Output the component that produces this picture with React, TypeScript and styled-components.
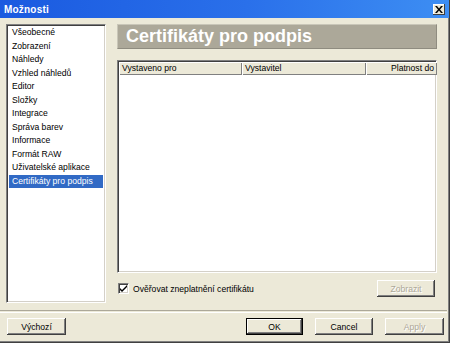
import { FC } from 'react';
import styled, { createGlobalStyle, css } from 'styled-components';

const GlobalStyle = createGlobalStyle`
  html, body {
    margin: 0;
    padding: 0;
    background: #ece9d8;
  }
  body {
    font-family: 'Liberation Sans', Arial, sans-serif;
    font-size: 8.6px;
    color: #000;
  }
`;

const sections = [
  'Všeobecné',
  'Zobrazení',
  'Náhledy',
  'Vzhled náhledů',
  'Editor',
  'Složky',
  'Integrace',
  'Správa barev',
  'Informace',
  'Formát RAW',
  'Uživatelské aplikace',
  'Certifikáty pro podpis',
];

const columns = [
  { label: 'Vystaveno pro', width: 123, align: 'left' },
  { label: 'Vystavitel', width: 124, align: 'left' },
  { label: 'Platnost do', width: 71, align: 'right' },
];

const App: FC = () => {
  return (
    <>
      <GlobalStyle />
      <Window>
        <TitleBar>
          <Title>Možnosti</Title>
          <CloseButton>
            <svg width="8" height="7" viewBox="0 0 8 7">
              <path d="M0 0h2l2 2.5L6 0h2L5 3.5 8 7H6L4 4.5 2 7H0l3-3.5z" fill="#000" />
            </svg>
          </CloseButton>
        </TitleBar>
        <Body>
          <Main>
            <SectionList>
              {sections.map((s) => (
                <SectionItem key={s} selected={s === 'Certifikáty pro podpis'}>
                  {s}
                </SectionItem>
              ))}
            </SectionList>
            <Panel>
              <PanelHeader>Certifikáty pro podpis</PanelHeader>
              <Table>
                <HeaderRow>
                  {columns.map((c) => (
                    <HeaderCell key={c.label} w={c.width} align={c.align}>
                      {c.label}
                    </HeaderCell>
                  ))}
                  <HeaderFill />
                </HeaderRow>
              </Table>
              <OptionsRow>
                <CheckLabel>
                  <CheckBox>
                    <svg width="7" height="7" viewBox="0 0 7 7">
                      <path d="M0 3l2 2 5-5v2L2 7 0 5z" fill="#000" />
                    </svg>
                  </CheckBox>
                  Ověřovat zneplatnění certifikátu
                </CheckLabel>
                <Button disabled wide={58}>Zobrazit</Button>
              </OptionsRow>
            </Panel>
          </Main>
          <Separator />
          <Footer>
            <Button wide={59}>Výchozí</Button>
            <FooterRight>
              <Button wide={57} primary>OK</Button>
              <Button wide={58}>Cancel</Button>
              <Button wide={59} disabled>Apply</Button>
            </FooterRight>
          </Footer>
        </Body>
      </Window>
    </>
  );
};

export default App;

const Window = styled.div`
  width: 450px;
  height: 343px;
  box-sizing: border-box;
  display: flex;
  flex-direction: column;
  background: #ece9d8;
  border-right: 1px solid #404040;
  border-bottom: 1px solid #404040;
  box-shadow: inset -1px -1px 0 #808080;
`;

const TitleBar = styled.div`
  height: 18px;
  flex: none;
  display: flex;
  align-items: center;
  justify-content: space-between;
  padding: 0 4px 0 4px;
  background: linear-gradient(90deg, #1a5ae0 0%, #2a70ea 55%, #3d8ef3 100%);
`;

const Title = styled.span`
  color: #fff;
  font-weight: bold;
  font-size: 10px;
  letter-spacing: 0.2px;
`;

const CloseButton = styled.div`
  width: 12px;
  height: 11px;
  display: flex;
  align-items: center;
  justify-content: center;
  background: #ece9d8;
  box-shadow: inset -1px -1px 0 #404040, inset 1px 1px 0 #fff;
`;

const Body = styled.div`
  flex: 1;
  display: flex;
  flex-direction: column;
`;

const Main = styled.div`
  display: flex;
  gap: 11px;
  padding: 6px 0 0 6px;
  height: 279px;
`;

const SectionList = styled.div`
  width: 100px;
  height: 279px;
  box-sizing: border-box;
  background: #fff;
  border-top: 1px solid #808080;
  border-left: 1px solid #808080;
  border-right: 1px solid #fff;
  border-bottom: 1px solid #fff;
  box-shadow: inset 1px 1px 0 #404040, inset -1px -1px 0 #d4d0c8;
  padding: 1px 2px;
`;

const SectionItem = styled.div<{ selected?: boolean }>`
  height: 13.5px;
  line-height: 13.5px;
  padding-left: 3px;
  white-space: nowrap;
  ${({ selected }) =>
    selected
      ? css`
          background: #316ac5;
          color: #fff;
        `
      : null}
`;

const Panel = styled.div`
  width: 320px;
  display: flex;
  flex-direction: column;
`;

const PanelHeader = styled.div`
  height: 25px;
  box-sizing: border-box;
  padding-left: 8px;
  background: #aca899;
  border-top: 1px solid #c9c6b8;
  border-left: 1px solid #c9c6b8;
  border-right: 1px solid #8f8c80;
  border-bottom: 1px solid #8f8c80;
  color: #fff;
  font-weight: bold;
  font-size: 18px;
  line-height: 23px;
  white-space: nowrap;
`;

const Table = styled.div`
  margin-top: 11px;
  height: 213px;
  box-sizing: border-box;
  background: #fff;
  border-top: 1px solid #808080;
  border-left: 1px solid #808080;
  border-right: 1px solid #fff;
  border-bottom: 1px solid #fff;
  box-shadow: inset 1px 1px 0 #404040, inset -1px -1px 0 #d4d0c8;
  padding: 1px;
`;

const HeaderRow = styled.div`
  display: flex;
  height: 13px;
`;

const HeaderCell = styled.div<{ w: number; align: string }>`
  width: ${({ w }) => w}px;
  box-sizing: border-box;
  flex: none;
  text-align: ${({ align }) => align};
  padding: 0 3px;
  line-height: 13px;
  background: #ece9d8;
  box-shadow: inset 1px 1px 0 #fff, inset -1px -1px 0 #808080;
  white-space: nowrap;
`;

const HeaderFill = styled.div`
  flex: 1;
  background: #ece9d8;
  box-shadow: inset 1px 1px 0 #fff, inset -1px -1px 0 #808080;
`;

const OptionsRow = styled.div`
  display: flex;
  align-items: center;
  justify-content: space-between;
  margin-top: 7px;
  padding-right: 2px;
`;

const CheckLabel = styled.label`
  display: flex;
  align-items: center;
  gap: 4px;
  padding-left: 1px;
`;

const CheckBox = styled.span`
  width: 11px;
  height: 11px;
  box-sizing: border-box;
  display: flex;
  align-items: center;
  justify-content: center;
  background: #fff;
  border-top: 1px solid #808080;
  border-left: 1px solid #808080;
  border-right: 1px solid #fff;
  border-bottom: 1px solid #fff;
  box-shadow: inset 1px 1px 0 #404040, inset -1px -1px 0 #d4d0c8;
`;

const Button = styled.button<{ wide: number; primary?: boolean }>`
  width: ${({ wide }) => wide}px;
  height: 17px;
  padding: 0;
  font-family: inherit;
  font-size: 8.6px;
  color: #000;
  background: #ece9d8;
  border: none;
  box-shadow: inset -1px -1px 0 #404040, inset 1px 1px 0 #fff,
    inset -2px -2px 0 #808080;
  ${({ primary }) =>
    primary
      ? css`
          outline: 1px solid #000;
          outline-offset: -1px;
          box-shadow: inset -2px -2px 0 #404040, inset 2px 2px 0 #fff,
            inset -3px -3px 0 #808080;
        `
      : null}
  &:disabled {
    color: #aca899;
    text-shadow: 1px 1px 0 #fff;
  }
`;

const Separator = styled.div`
  margin-top: 7px;
  height: 1px;
  border-top: 1px solid #aca899;
  border-bottom: 1px solid #fff;
  margin-right: 2px;
`;

const Footer = styled.div`
  display: flex;
  justify-content: space-between;
  padding: 5px 5px 0 7px;
`;

const FooterRight = styled.div`
  display: flex;
  gap: 12px;
`;
